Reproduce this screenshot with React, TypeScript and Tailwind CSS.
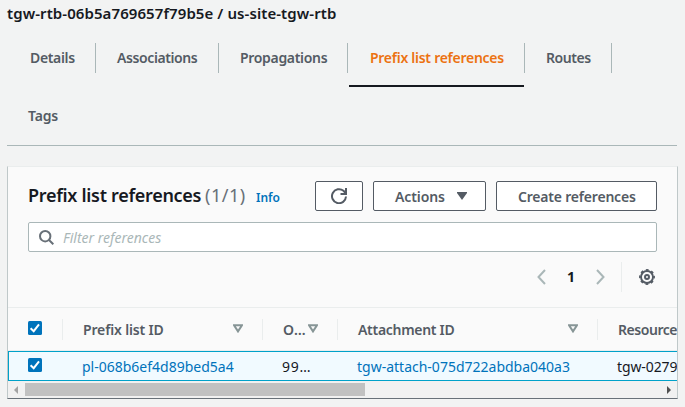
import React from "react";

const tabs = [
  { label: "Details", box: "w-[96px] pl-[30px]", track: "tracking-[-0.35px]" },
  { label: "Associations", box: "w-[123px] pl-[21px]", track: "tracking-[-0.4px]" },
  { label: "Propagations", box: "w-[129px] pl-[21px]", track: "tracking-[-0.32px]" },
  { label: "Prefix list references", box: "w-[177px] pl-[22px]", track: "tracking-[-0.27px]", active: true },
  { label: "Routes", box: "w-[87px] pl-[21px]", track: "tracking-[-0.45px]" },
];

function Checkbox() {
  return (
    <svg className="mb-[2px] block h-[14px] w-[14px] shrink-0" viewBox="0 0 14 14">
      <rect width="14" height="14" rx="1.5" fill="#0073bb" />
      <path d="M2.6 7.3 5.7 10.2 11 3.4" fill="none" stroke="#fff" strokeWidth="2" />
    </svg>
  );
}

function SortIcon() {
  return (
    <svg className="mb-px block h-[9px] w-[10px] shrink-0" viewBox="0 0 10 9">
      <path d="M1 1.2h8L5 7.4z" fill="none" stroke="#879596" strokeWidth="2" />
    </svg>
  );
}

export default function App() {
  return (
    <div className="h-[407px] w-[685px] overflow-hidden bg-[#f2f3f3] font-['Noto_Sans','Open_Sans',sans-serif] text-[14px] whitespace-nowrap text-[#16191f]">
      <h1 className="h-[43px] pl-[7px] text-[15px] leading-[26px] font-semibold tracking-[0.08px]">
        tgw-rtb-06b5a769657f79b5e / us-site-tgw-rtb
      </h1>
      <nav className="mr-[8px] h-[103px]">
        <div className="flex h-[44px]">
          {tabs.map((t) => (
            <div key={t.label} className={`relative h-[30px] shrink-0 border-r border-[#aab7b8] leading-[30px] font-semibold ${t.box} ${t.track} ${t.active ? "text-[#ec7211]" : "text-[#545b64]"}`}>
              {t.label}
              {t.active && <div className="absolute top-[42px] right-0 left-px h-[2px] bg-[#16191f]" />}
            </div>
          ))}
        </div>
        <div className="ml-[7px] h-[59px] border-b border-[#aab7b8] pt-[14px] pl-[21px] leading-[30px] font-semibold tracking-[-0.2px] text-[#545b64]">Tags</div>
      </nav>

      <section className="mt-[20px] ml-[7px] flex h-[233px] w-[671px] flex-col overflow-hidden border border-t-[#eaeded] border-r-[#bfc8c9] border-b-[#687078] border-l-[#bfc8c9] bg-[#fafafa]">
        <header className="flex h-[55px] shrink-0 pt-[14px] pl-[20px]">
          <h2 className="w-[177px] text-[18px] leading-[29px] font-semibold tracking-[-0.3px]">Prefix list references</h2>
          <span className="w-[51px] text-[18px] leading-[29px] tracking-[0.5px] text-[#687078]">(1/1)</span>
          <a className="w-[59px] pt-[2px] text-[12px] leading-[30px] font-semibold text-[#0073bb]">Info</a>
          <button className="mr-[10px] flex h-[30px] w-[48px] items-center justify-center rounded-[2px] border border-[#545b64] bg-white">
            <svg className="h-[16px] w-[16px]" viewBox="0 0 16 16" fill="none" stroke="#545b64" strokeWidth="2">
              <path d="M15 8.5A7 7 0 1 1 12.5 2.8L15 5.5" />
              <path d="M15 0v6H9.5" />
            </svg>
          </button>
          <button className="mr-[10px] flex h-[30px] w-[113px] items-center rounded-[2px] border border-[#545b64] bg-white pl-[21px] font-semibold tracking-[-0.1px] text-[#545b64]">
            <span className="w-[62px] text-left">Actions</span>
            <svg className="h-[8px] w-[10px]" viewBox="0 0 10 8"><path d="M0 0h10v1L5 8 0 1z" fill="#545b64" /></svg>
          </button>
          <button className="flex h-[30px] w-[161px] items-center rounded-[2px] border border-[#545b64] bg-white pl-[21px] font-semibold tracking-[-0.2px] text-[#545b64]">Create references</button>
        </header>

        <div className="ml-[20px] flex h-[30px] w-[629px] shrink-0 items-center rounded-[2px] border border-[#aab7b8] bg-white pl-[10px]">
          <svg className="mr-[9px] h-[15px] w-[15px]" viewBox="0 0 15 15" fill="none" stroke="#687078" strokeWidth="2">
            <circle cx="6.2" cy="6.2" r="5.2" />
            <path d="m10 10 4.3 4.3" />
          </svg>
          <span className="text-[#aab7b8] italic">Filter references</span>
        </div>

        <div className="flex h-[55px] shrink-0 pt-[10px] pl-[529px]">
          <svg className="mt-[7px] h-[16px] w-[9px]" viewBox="0 0 9 16" fill="none" stroke="#aab7b8" strokeWidth="2"><path d="M8 1 1.5 8 8 15" /></svg>
          <span className="w-[50px] text-center leading-[30px] font-bold">1</span>
          <svg className="mt-[7px] h-[16px] w-[9px]" viewBox="0 0 9 16" fill="none" stroke="#aab7b8" strokeWidth="2"><path d="m1 1 6.5 7L1 15" /></svg>
          <div className="ml-[16px] h-[30px] border-l border-[#eaeded] pt-[7px] pl-[17px]">
            <svg className="h-[16px] w-[16px]" viewBox="0 0 16 16" fill="none" stroke="#545b64">
              <circle cx="8" cy="8" r="6" strokeWidth="1.9" />
              <circle cx="8" cy="8" r="7.1" strokeWidth="1.7" strokeDasharray="2.788 2.788" strokeDashoffset="1.394" />
              <circle cx="8" cy="8" r="2" strokeWidth="2" />
            </svg>
          </div>
        </div>

        <div className="flex h-[44px] shrink-0 items-center border-y border-[#eaeded] font-semibold tracking-[-0.15px] text-[#545b64]">
          <div className="flex h-[21px] w-[55px] shrink-0 items-center border-r border-[#eaeded] pl-[20px]"><Checkbox /></div>
          <div className="flex h-[21px] w-[200px] shrink-0 items-center border-r border-[#eaeded] pl-[20px]"><span className="w-[150px]">Prefix list ID</span><SortIcon /></div>
          <div className="flex h-[21px] w-[75px] shrink-0 items-center border-r border-[#eaeded] pl-[20px]"><span className="w-[25px] tracking-[0.5px]">O…</span><SortIcon /></div>
          <div className="flex h-[21px] w-[260px] shrink-0 items-center border-r border-[#eaeded] pl-[20px]"><span className="w-[210px] tracking-[-0.3px]">Attachment ID</span><SortIcon /></div>
          <div className="pl-[20px] tracking-[-0.45px]">Resource</div>
        </div>

        <div className="flex h-[30px] shrink-0 items-center border border-r-0 border-[#00a1c9] bg-[#f1faff]">
          <div className="w-[54px] shrink-0 pl-[19px]"><Checkbox /></div>
          <a className="w-[200px] shrink-0 pl-[19px] text-[#0073bb]">pl-068b6ef4d89bed5a4</a>
          <span className="w-[75px] shrink-0 pl-[19px] tracking-[0.8px]">99…</span>
          <a className="w-[260px] shrink-0 pl-[19px] text-[#0073bb]">tgw-attach-075d722abdba040a3</a>
          <span className="pl-[19px] tracking-[-0.1px]">tgw-0279</span>
        </div>

        <div className="flex h-[17px] shrink-0 items-center bg-[#f1f1f1]">
          <svg className="mr-[7px] ml-[6px] h-[8px] w-[4px]" viewBox="0 0 4 8"><path d="M4 0v8L0 4z" fill="#a3a3a3" /></svg>
          <div className="h-[13px] w-[340px] bg-[#c1c1c1]" />
          <svg className="ml-[302px] h-[8px] w-[4px]" viewBox="0 0 4 8"><path d="M0 0v8l4-4z" fill="#505050" /></svg>
        </div>
      </section>
    </div>
  );
}
